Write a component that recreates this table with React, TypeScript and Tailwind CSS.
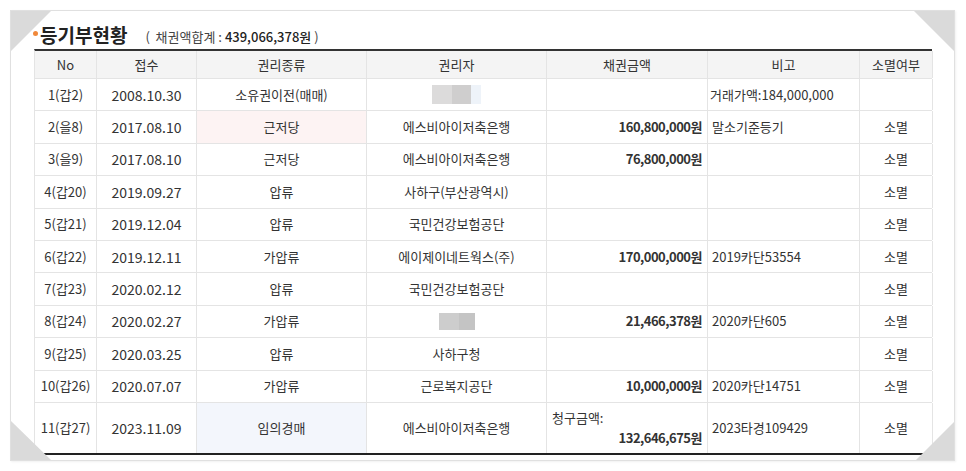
import React from "react";

type Row = {
  no: string;
  date: string;
  kind: string;
  kindBg?: string;
  holder: React.ReactNode;
  amount: React.ReactNode;
  note: string;
  gone: string;
};

const Blur1 = () => (
  <div className="flex h-[19px]">
    <div className="w-[20px] bg-[#dcdbdb]" />
    <div className="w-[19px] bg-[#cfcece]" />
    <div className="w-[10px] bg-[#eef3f9]" />
  </div>
);
const Blur2 = () => (
  <div className="flex h-[17px]">
    <div className="w-[20px] bg-[#cdcdcd]" />
    <div className="w-[16px] bg-[#c4c4c4]" />
  </div>
);

const rows: Row[] = [
  { no: "1(갑2)", date: "2008.10.30", kind: "소유권이전(매매)", holder: <Blur1 />, amount: "", note: "거래가액:184,000,000", gone: "" },
  { no: "2(을8)", date: "2017.08.10", kind: "근저당", kindBg: "bg-[#fdf3f3]", holder: "에스비아이저축은행", amount: "160,800,000원", note: "말소기준등기", gone: "소멸" },
  { no: "3(을9)", date: "2017.08.10", kind: "근저당", holder: "에스비아이저축은행", amount: "76,800,000원", note: "", gone: "소멸" },
  { no: "4(갑20)", date: "2019.09.27", kind: "압류", holder: "사하구(부산광역시)", amount: "", note: "", gone: "소멸" },
  { no: "5(갑21)", date: "2019.12.04", kind: "압류", holder: "국민건강보험공단", amount: "", note: "", gone: "소멸" },
  { no: "6(갑22)", date: "2019.12.11", kind: "가압류", holder: "에이제이네트웍스(주)", amount: "170,000,000원", note: "2019카단53554", gone: "소멸" },
  { no: "7(갑23)", date: "2020.02.12", kind: "압류", holder: "국민건강보험공단", amount: "", note: "", gone: "소멸" },
  { no: "8(갑24)", date: "2020.02.27", kind: "가압류", holder: <Blur2 />, amount: "21,466,378원", note: "2020카단605", gone: "소멸" },
  { no: "9(갑25)", date: "2020.03.25", kind: "압류", holder: "사하구청", amount: "", note: "", gone: "소멸" },
  { no: "10(갑26)", date: "2020.07.07", kind: "가압류", holder: "근로복지공단", amount: "10,000,000원", note: "2020카단14751", gone: "소멸" },
];

const cols = "grid grid-cols-[62px_100px_170px_180px_161px_152px_73px]";
const cell = "border-r border-[#e4e4e4] flex items-center";

export default function App() {
  return (
    <div
      className="bg-white w-[966px] h-[471px] pt-[10px] pl-[10px] text-[#333]"
      style={{ fontFamily: '"Noto Sans CJK KR", "Noto Sans", sans-serif' }}
    >
      <div className="relative w-[945px] h-[451px] border border-[#e0e0e0] bg-white shadow-[1px_1px_2px_rgba(0,0,0,0.06)] pl-[23px]">
        {/* title */}
        <div className="h-[38px] flex items-center pt-[10px] relative">
          <span className="absolute left-[-1px] top-[20px] w-[5px] h-[5px] rounded-full bg-[#f0883a]" />
          <span className="ml-[6px] text-[19px] font-bold leading-[22px] text-[#222]">등기부현황</span>
          <span className="ml-[18px] text-[13px] leading-[16px] mt-[3px] text-[#444]">
            (&nbsp; 채권액합계 : <span className="font-medium text-[#222]">439,066,378원</span> )
          </span>
        </div>

        {/* table */}
        <div className="w-[898px] border-t-2 border-[#333] border-l border-l-[#e4e4e4] text-[13px] leading-[16px]">
          <div className={`${cols} h-[28px] bg-[#f4f4f4] border-b border-[#e4e4e4]`}>
            {["No", "접수", "권리종류", "권리자", "채권금액", "비고", "소멸여부"].map((h) => (
              <div key={h} className={`${cell} justify-center`}>{h}</div>
            ))}
          </div>
          {rows.map((r) => (
            <div key={r.no} className={`${cols} h-[32.4px] border-b border-[#e4e4e4]`}>
              <div className={`${cell} justify-center`}>{r.no}</div>
              <div className={`${cell} justify-center text-[14px]`}>{r.date}</div>
              <div className={`${cell} justify-center ${r.kindBg ?? ""}`}>{r.kind}</div>
              <div className={`${cell} justify-center`}>{r.holder}</div>
              <div className={`${cell} justify-end pr-[5px] font-semibold tracking-[-0.5px] text-[#333]`}>{r.amount}</div>
              <div className={`${cell} ${r.no === "1(갑2)" ? "pl-[2px]" : "pl-[4px]"}`}>{r.note}</div>
              <div className={`${cell} justify-center`}>{r.gone}</div>
            </div>
          ))}
          <div className={`${cols} h-[52px] border-b-2 border-[#222]`}>
            <div className={`${cell} justify-center`}>11(갑27)</div>
            <div className={`${cell} justify-center text-[14px]`}>2023.11.09</div>
            <div className={`${cell} justify-center bg-[#f3f6fc]`}>임의경매</div>
            <div className={`${cell} justify-center`}>에스비아이저축은행</div>
            <div className="border-r border-[#e4e4e4] flex flex-col justify-center pl-[5px] pr-[5px]">
              <div>청구금액:</div>
              <div className="text-right font-semibold tracking-[-0.5px] mt-[4px]">132,646,675원</div>
            </div>
            <div className={`${cell} pl-[4px]`}>2023타경109429</div>
            <div className={`${cell} justify-center`}>소멸</div>
          </div>
        </div>

        {/* corner triangles */}
        <div className="absolute left-0 top-0 w-[40px] h-[40px] bg-[#dadada] [clip-path:polygon(0_0,100%_0,0_100%)]" />
        <div className="absolute right-0 top-0 w-[40px] h-[40px] bg-[#dadada] [clip-path:polygon(0_0,100%_0,100%_100%)]" />
        <div className="absolute left-0 bottom-0 w-[40px] h-[39px] bg-[#dadada] [clip-path:polygon(0_0,0_100%,100%_100%)]" />
        <div className="absolute right-0 bottom-0 w-[38px] h-[38px] bg-[#dadada] [clip-path:polygon(100%_0,100%_100%,0_100%)]" />
      </div>
    </div>
  );
}
